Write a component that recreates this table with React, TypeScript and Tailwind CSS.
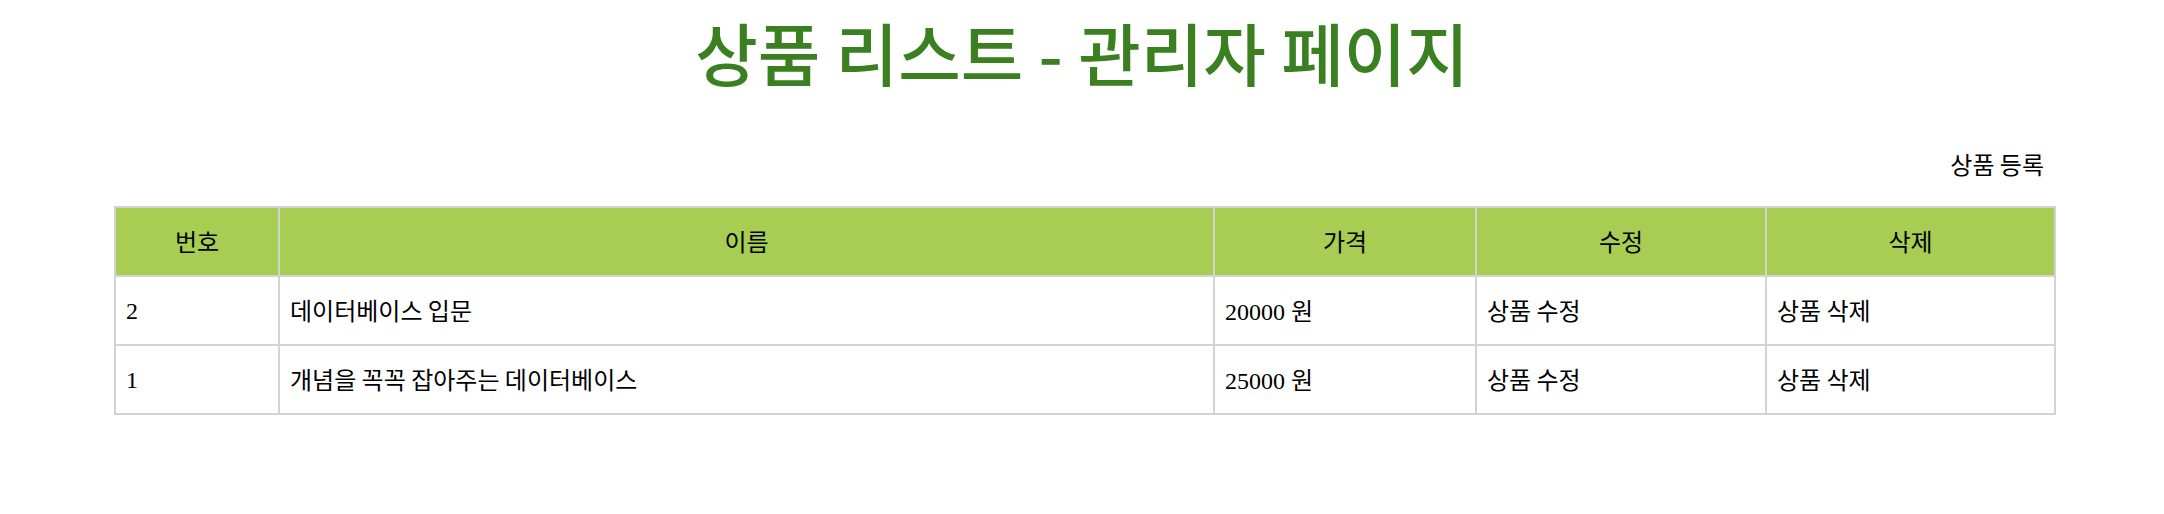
const products = [
  { id: 2, name: '데이터베이스 입문', price: 20000 },
  { id: 1, name: '개념을 꼭꼭 잡아주는 데이터베이스', price: 25000 },
];

const cell = 'border-2 border-[#d3d3d3] h-[69px] px-[10px] leading-[28px]';
// Korean glyphs in the reference are drawn with a sans CJK face
const ko = "font-['Noto_Sans_CJK_KR',sans-serif]";

export default function App() {
  return (
    <div className="w-[2164px] h-[514px] bg-white text-black font-['Liberation_Serif','Noto_Sans_CJK_KR',serif]">
      <h1 className="pt-[10px] text-center text-[68px] leading-[84px] font-medium text-[#3a7f20] font-['Noto_Sans_CJK_KR',sans-serif]">
        상품 리스트 - 관리자 페이지
      </h1>

      <div className="mt-[56px] w-[1942px] ml-[114px] text-right pr-[12px] text-[24px] leading-[28px]">
        <a href="#" className={ko}>상품 등록</a>
      </div>

      <table className="mt-[26px] ml-[114px] w-[1942px] table-fixed border-collapse text-[24px]">
        <colgroup>
          <col className="w-[164px]" />
          <col className="w-[935px]" />
          <col className="w-[262px]" />
          <col className="w-[290px]" />
          <col />
        </colgroup>
        <thead>
          <tr className="bg-[#a7cd52]">
            {['번호', '이름', '가격', '수정', '삭제'].map((h) => (
              <th key={h} className={`${cell} font-normal text-center`}>
                <span className={ko}>{h}</span>
              </th>
            ))}
          </tr>
        </thead>
        <tbody>
          {products.map((p) => (
            <tr key={p.id}>
              <td className={cell}>{p.id}</td>
              <td className={cell}>
                <span className={ko}>{p.name}</span>
              </td>
              <td className={cell}>
                {p.price} <span className={ko}>원</span>
              </td>
              <td className={cell}>
                <a href="#" className={ko}>상품 수정</a>
              </td>
              <td className={cell}>
                <a href="#" className={ko}>상품 삭제</a>
              </td>
            </tr>
          ))}
        </tbody>
      </table>
    </div>
  );
}
